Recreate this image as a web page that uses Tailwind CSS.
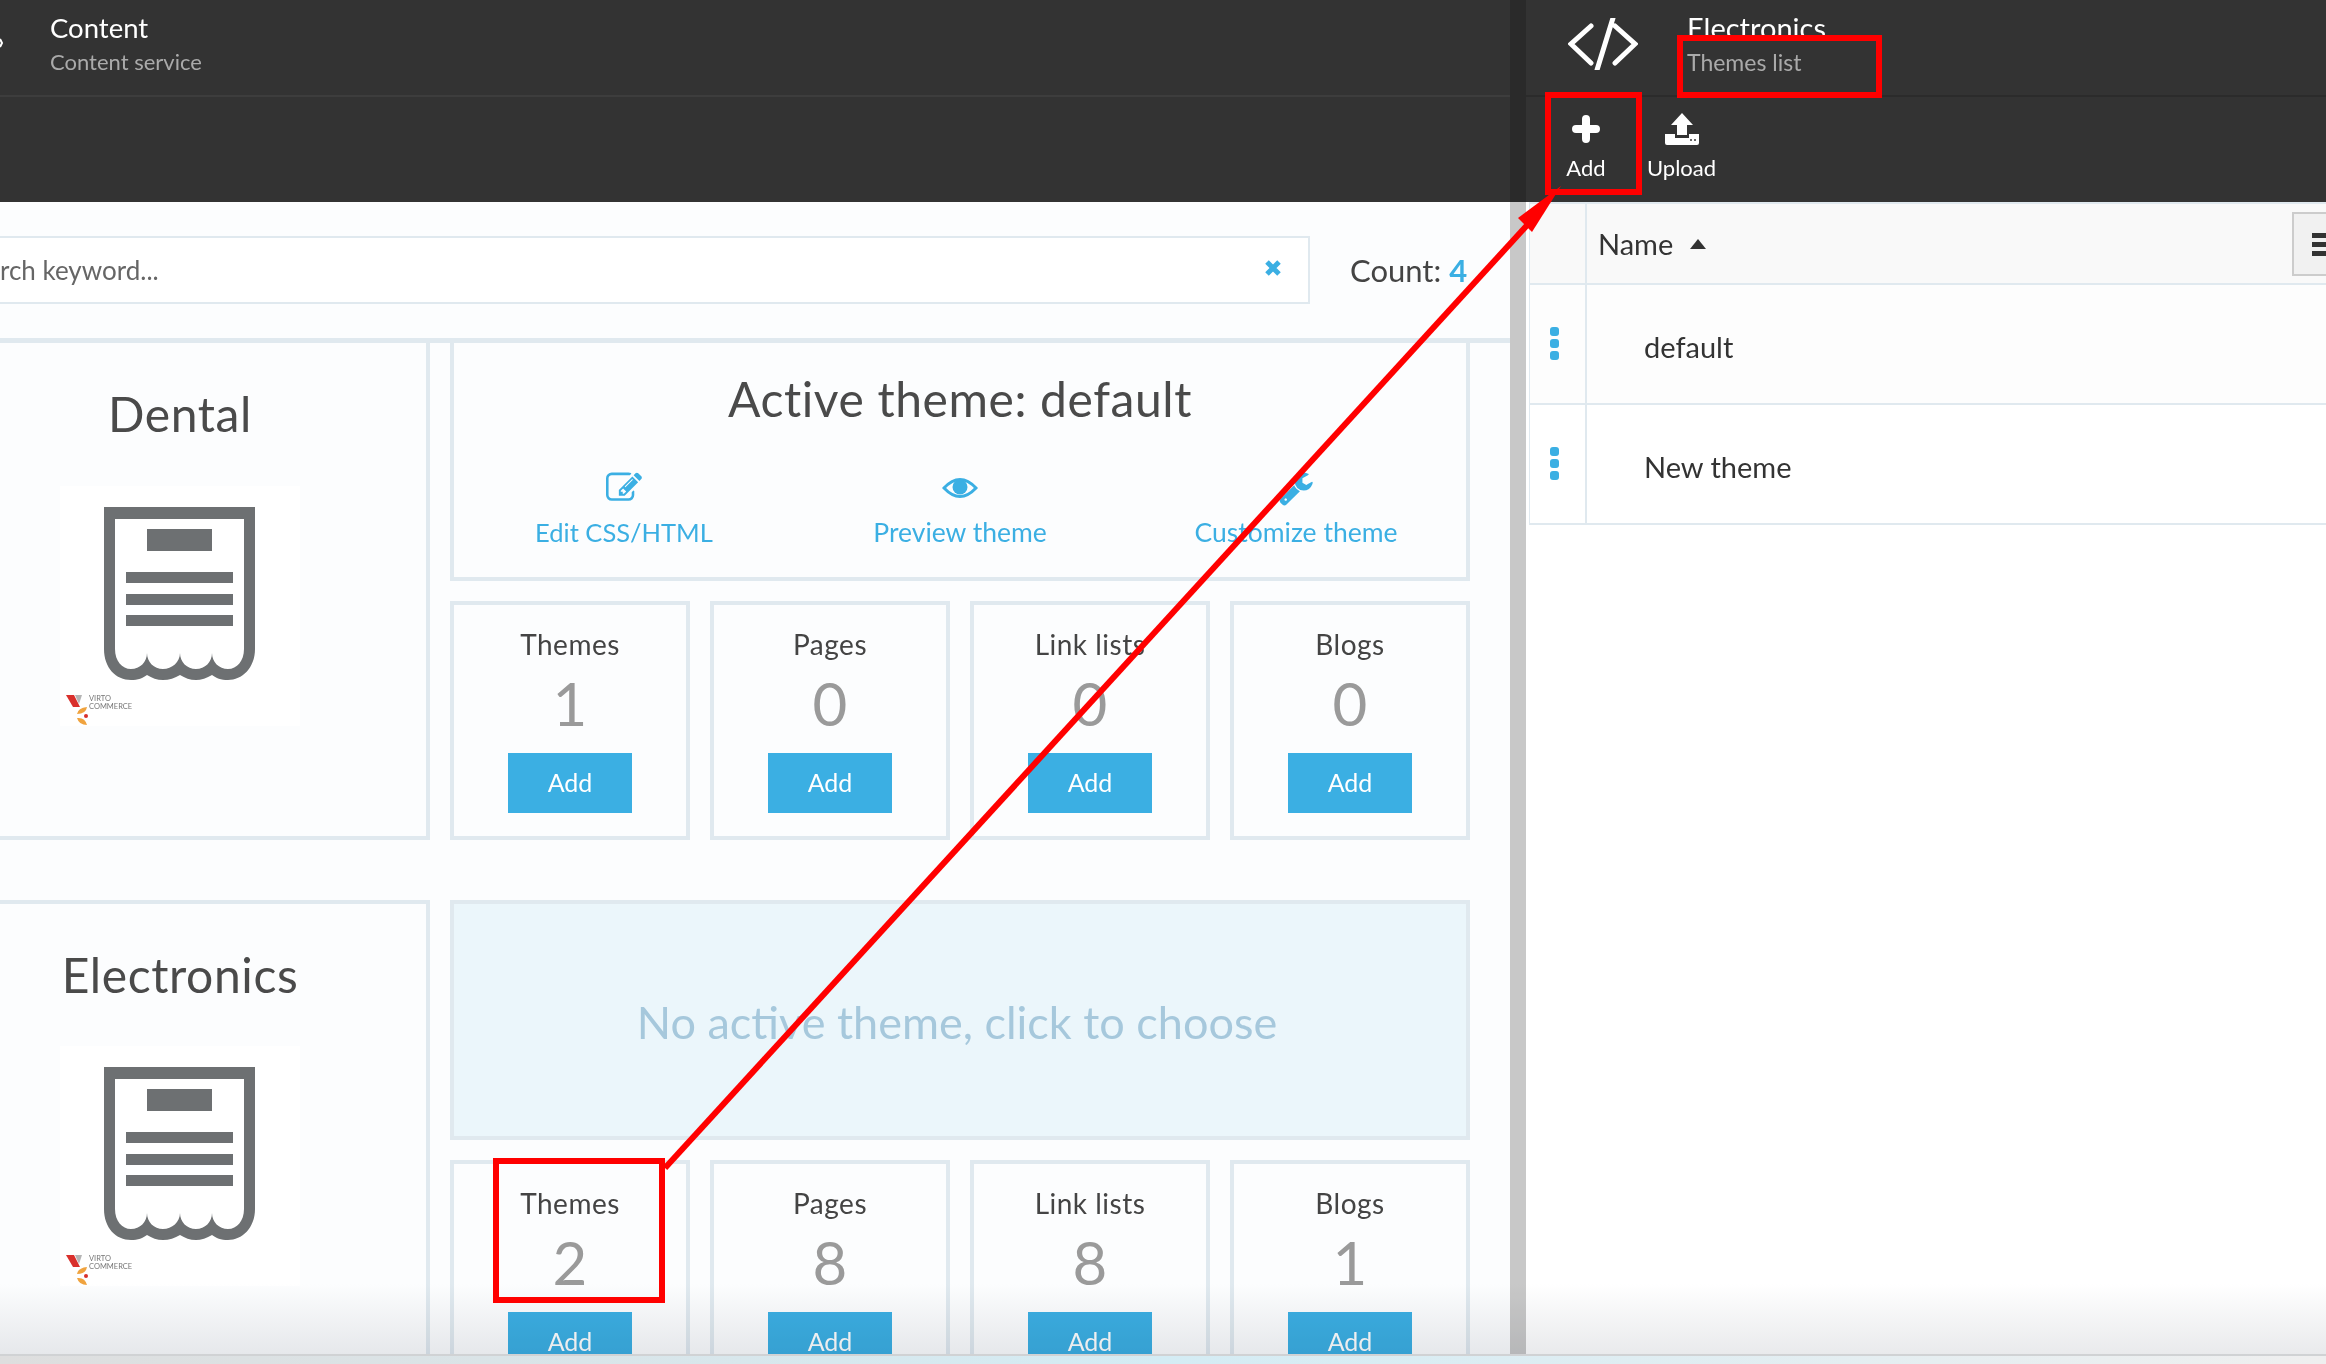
<!DOCTYPE html>
<html lang="en">
<head>
    <meta charset="UTF-8">
    <title>Content - Themes list</title>
    <script src="https://cdn.jsdelivr.net/npm/@tailwindcss/browser@4"></script>
</head>
<body class="relative h-screen overflow-hidden bg-white font-['Lato',sans-serif] text-[#444]">
    <div class="flex h-[1364px]">
        <!-- Content blade -->
        <div class="w-[1510px] h-full overflow-hidden bg-[#fcfdfe]">
            <div class="h-[202px] bg-[#333]">
                <div class="relative h-[97px] pl-[50px] pt-[11px] border-b-2 border-[#3d3d3d]">
                    <svg class="absolute left-0 top-[38px] w-[3px] h-[10px]" viewBox="0 0 3 10"><path d="M0 1l2 4-2 4" fill="none" stroke="#fff" stroke-width="2"/></svg>
                    <div class="text-[27.5px] leading-[34px] text-white">Content</div>
                    <div class="text-[22px] leading-[34px] text-[#aaa]">Content service</div>
                </div>
            </div>

            <div class="h-[136px] flex items-center pr-[40px]">
                <div class="w-[1310px] h-[68px] flex items-center justify-between bg-white border-y-2 border-r-2 border-[#e0e9ef] pr-[26px]">
                    <span class="text-[26px] text-[#666]">rch keyword...</span>
                    <svg class="w-[18px] h-[18px] mb-[4px]" viewBox="0 0 18 18"><path d="M3 3l12 12M15 3L3 15" stroke="#3bafe3" stroke-width="5"/></svg>
                </div>
                <div class="ml-[40px] text-[31px] text-[#444]">Count: <b class="text-[#3bafe3]">4</b></div>
            </div>

            <div class="border-t-[5px] border-[#e0e9ef] pr-[40px]">
                <!-- Dental -->
                <div class="flex gap-[20px] h-[497px]">
                    <div class="w-[430px] border-r-4 border-b-4 border-[#e0e9ef] pr-[66px] flex flex-col items-center">
                        <div class="mt-[41px] h-[60px] text-[48px] tracking-[0.6px] leading-[60px] text-[#4a4a4a]">Dental</div>
                        <div class="mt-[42px] w-[240px] h-[240px] bg-white">
                            <svg width="240" height="240" viewBox="0 0 240 240">
                                <path fill-rule="evenodd" d="M44 21H195V163C195 182 182 194 168 194 161 194 156 192 152 189 147 192 141 194 136 194 130 194 125 192 120 189 115 192 109 194 103 194 97 194 92 192 87 189 83 192 78 194 71 194 56 194 44 182 44 163ZM55 33V163C55 175 62 183 71 183 80 183 87 176 87 167 87 176 94 183 103 183 112 183 120 176 120 167 120 176 127 183 136 183 145 183 152 176 152 167 152 176 159 183 168 183 177 183 184 175 184 163V33Z" fill="#6d7072"/>
                                <path d="M87 43h65v22H87zM66 86h107v11H66zM66 108h107v11H66zM66 129h107v11H66z" fill="#6d7072"/>
                                <path d="M6 209h8l6 12h-7z" fill="#d9302c"/>
                                <path d="M15 209h7l-3 9z" fill="#b5b5b5"/>
                                <path d="M17 228q1-6 10-7-1 7-10 7zM17 232q8-1 10 7-8 0-10-7z" fill="#f0a33e"/>
                                <circle cx="26" cy="230" r="2" fill="#d9302c"/>
                                <text x="29" y="215" font-size="7.5" fill="#777">VIRTO</text>
                                <text x="29" y="223" font-size="7.5" fill="#777">COMMERCE</text>
                            </svg>
                        </div>
                    </div>
                    <div class="w-[1020px] flex flex-col gap-[20px]">
                        <div class="h-[238px] border-x-4 border-b-4 border-[#e0e9ef] flex flex-col items-center">
                            <div class="mt-[26px] h-[60px] text-[48px] tracking-[0.6px] leading-[60px] text-[#4a4a4a]">Active theme: default</div>
                            <div class="mt-[41px] w-full grid grid-cols-3 px-[2px] text-[#3bafe3] text-[26.5px] leading-[32px] text-center">
                                <div class="flex flex-col items-center gap-[10px]">
                                    <svg class="w-[36px] h-[36px]" viewBox="0 0 1792 1792" fill="#3bafe3"><path d="M888 1184l116-116-152-152-116 116v56h96v96h56zm440-720q-16-16-33 1l-350 350q-17 17-1 33t33-1l350-350q17-17 1-33zm80 594v190q0 119-84.5 203.5t-203.5 84.5h-832q-119 0-203.5-84.5t-84.5-203.5v-832q0-119 84.5-203.5t203.5-84.5h832q63 0 117 25 15 7 18 23 3 17-9 29l-49 49q-14 14-32 8-23-6-45-6h-832q-66 0-113 47t-47 113v832q0 66 47 113t113 47h832q66 0 113-47t47-113v-126q0-13 9-22l64-64q15-15 35-7t20 29zm-96-738l288 288-672 672h-288v-288zm444 132l-92 92-288-288 92-92q28-28 68-28t68 28l152 152q28 28 28 68t-28 68z"/></svg>
                                    <span class="text-[25.5px]">Edit CSS/HTML</span>
                                </div>
                                <div class="flex flex-col items-center gap-[10px]">
                                    <svg class="w-[36px] h-[36px]" viewBox="0 0 36 36"><path d="M2 18q16-17 32 0-16 17-32 0Z" fill="none" stroke="#3bafe3" stroke-width="3"/><circle cx="18" cy="17" r="7.5" fill="#3bafe3"/></svg>
                                    <span>Preview theme</span>
                                </div>
                                <div class="flex flex-col items-center gap-[10px]">
                                    <svg class="w-[36px] h-[36px]" viewBox="0 0 1792 1792" fill="#3bafe3"><path d="M448 1472q0-26-19-45t-45-19-45 19-19 45 19 45 45 19 45-19 19-45zm644-420l-682 682q-37 37-90 37-52 0-91-37l-106-108q-38-36-38-90 0-53 38-91l681-681q39 98 114.5 173.5t173.5 114.5zm634-435q0 39-23 106-47 134-164.5 217.5t-258.5 83.5q-185 0-316.5-131.5t-131.5-316.5 131.5-316.5 316.5-131.5q58 0 121.5 16.5t107.5 46.5q16 11 16 28t-16 28l-293 169v224l193 107q5-3 79-48.5t135.5-81 70.5-35.5q15 0 23.5 10t8.5 25z"/></svg>
                                    <span>Customize theme</span>
                                </div>
                            </div>
                        </div>
                        <div class="grid grid-cols-4 gap-[20px] h-[240px]">
                            <div class="border-4 border-[#e0e9ef] flex flex-col items-center"><div class="mt-[22px] text-[28px] tracking-[0.5px] leading-[34px]">Themes</div><div class="mt-[6px] text-[60px] leading-[72px] text-[#9a9a9a]">1</div><button class="mt-[14px] w-[124px] h-[60px] bg-[#3bafe3] text-white text-[25px]">Add</button></div>
                            <div class="border-4 border-[#e0e9ef] flex flex-col items-center"><div class="mt-[22px] text-[28px] tracking-[0.5px] leading-[34px]">Pages</div><div class="mt-[6px] text-[60px] leading-[72px] text-[#9a9a9a]">0</div><button class="mt-[14px] w-[124px] h-[60px] bg-[#3bafe3] text-white text-[25px]">Add</button></div>
                            <div class="border-4 border-[#e0e9ef] flex flex-col items-center"><div class="mt-[22px] text-[28px] tracking-[0.5px] leading-[34px]">Link lists</div><div class="mt-[6px] text-[60px] leading-[72px] text-[#9a9a9a]">0</div><button class="mt-[14px] w-[124px] h-[60px] bg-[#3bafe3] text-white text-[25px]">Add</button></div>
                            <div class="border-4 border-[#e0e9ef] flex flex-col items-center"><div class="mt-[22px] text-[28px] tracking-[0.5px] leading-[34px]">Blogs</div><div class="mt-[6px] text-[60px] leading-[72px] text-[#9a9a9a]">0</div><button class="mt-[14px] w-[124px] h-[60px] bg-[#3bafe3] text-white text-[25px]">Add</button></div>
                        </div>
                    </div>
                </div>

                <!-- Electronics -->
                <div class="flex gap-[20px] mt-[60px] h-[500px]">
                    <div class="w-[430px] border-r-4 border-t-4 border-[#e0e9ef] pr-[66px] flex flex-col items-center">
                        <div class="mt-[41px] h-[60px] text-[48px] tracking-[0.6px] leading-[60px] text-[#4a4a4a]">Electronics</div>
                        <div class="mt-[41px] w-[240px] h-[240px] bg-white">
                            <svg width="240" height="240" viewBox="0 0 240 240">
                                <path fill-rule="evenodd" d="M44 21H195V163C195 182 182 194 168 194 161 194 156 192 152 189 147 192 141 194 136 194 130 194 125 192 120 189 115 192 109 194 103 194 97 194 92 192 87 189 83 192 78 194 71 194 56 194 44 182 44 163ZM55 33V163C55 175 62 183 71 183 80 183 87 176 87 167 87 176 94 183 103 183 112 183 120 176 120 167 120 176 127 183 136 183 145 183 152 176 152 167 152 176 159 183 168 183 177 183 184 175 184 163V33Z" fill="#6d7072"/>
                                <path d="M87 43h65v22H87zM66 86h107v11H66zM66 108h107v11H66zM66 129h107v11H66z" fill="#6d7072"/>
                                <path d="M6 209h8l6 12h-7z" fill="#d9302c"/>
                                <path d="M15 209h7l-3 9z" fill="#b5b5b5"/>
                                <path d="M17 228q1-6 10-7-1 7-10 7zM17 232q8-1 10 7-8 0-10-7z" fill="#f0a33e"/>
                                <circle cx="26" cy="230" r="2" fill="#d9302c"/>
                                <text x="29" y="215" font-size="7.5" fill="#777">VIRTO</text>
                                <text x="29" y="223" font-size="7.5" fill="#777">COMMERCE</text>
                            </svg>
                        </div>
                    </div>
                    <div class="w-[1020px] flex flex-col gap-[20px]">
                        <div class="h-[240px] shrink-0 bg-[#ebf6fb] border-4 border-[#e0e9ef] pt-[6px] pr-[6px] flex items-center justify-center text-[45px] text-[#a6c8dc]">No active theme, click to choose</div>
                        <div class="grid grid-cols-4 gap-[20px] h-[240px]">
                            <div class="border-4 border-[#e0e9ef] flex flex-col items-center"><div class="mt-[22px] text-[28px] tracking-[0.5px] leading-[34px]">Themes</div><div class="mt-[6px] text-[60px] leading-[72px] text-[#9a9a9a]">2</div><button class="mt-[14px] w-[124px] h-[60px] bg-[#3bafe3] text-white text-[25px]">Add</button></div>
                            <div class="border-4 border-[#e0e9ef] flex flex-col items-center"><div class="mt-[22px] text-[28px] tracking-[0.5px] leading-[34px]">Pages</div><div class="mt-[6px] text-[60px] leading-[72px] text-[#9a9a9a]">8</div><button class="mt-[14px] w-[124px] h-[60px] bg-[#3bafe3] text-white text-[25px]">Add</button></div>
                            <div class="border-4 border-[#e0e9ef] flex flex-col items-center"><div class="mt-[22px] text-[28px] tracking-[0.5px] leading-[34px]">Link lists</div><div class="mt-[6px] text-[60px] leading-[72px] text-[#9a9a9a]">8</div><button class="mt-[14px] w-[124px] h-[60px] bg-[#3bafe3] text-white text-[25px]">Add</button></div>
                            <div class="border-4 border-[#e0e9ef] flex flex-col items-center"><div class="mt-[22px] text-[28px] tracking-[0.5px] leading-[34px]">Blogs</div><div class="mt-[6px] text-[60px] leading-[72px] text-[#9a9a9a]">1</div><button class="mt-[14px] w-[124px] h-[60px] bg-[#3bafe3] text-white text-[25px]">Add</button></div>
                        </div>
                    </div>
                </div>
            </div>
        </div>

        <!-- Divider between blades -->
        <div class="w-[16px] h-full flex flex-col">
            <div class="h-[202px] bg-[#2a2a2a]"></div>
            <div class="flex-1 bg-[#c8c8c8]"></div>
        </div>

        <!-- Themes list blade -->
        <div class="flex-1 min-w-0 overflow-hidden bg-white">
            <div class="h-[202px] bg-[#333]">
                <div class="h-[97px] flex border-b-2 border-[#2b2b2b] pt-[11px]">
                    <svg class="ml-[42px] mt-[7px] w-[70px] h-[52px]" viewBox="0 0 70 52" fill="none" stroke="#fff" stroke-width="5" stroke-linecap="round"><path d="M23 8L3 26l20 19M45 0L29 52M47 8l20 18-20 19" stroke-linejoin="miter"/></svg>
                    <div class="ml-[49px]">
                        <div class="text-[29px] leading-[34px] text-white">Electronics</div>
                        <div class="text-[23px] leading-[34px] text-[#aaa]">Themes list</div>
                    </div>
                </div>
                <div class="flex pl-[30px] text-white text-[22px]">
                    <div class="w-[60px] flex flex-col items-center pt-[18px]">
                        <svg class="w-[28px] h-[28px]" viewBox="0 0 28 28"><path d="M14 4v20M4 14h20" stroke="#fff" stroke-width="8" stroke-linecap="round"/></svg>
                        <span class="mt-[10px] leading-[30px]">Add</span>
                    </div>
                    <div class="ml-[31px] flex flex-col items-center pt-[16px]">
                        <svg class="w-[36px] h-[32px]" viewBox="0 0 36 32" fill="#fff"><path d="M18 0l11 12h-6v10H13V12H7z"/><path d="M1 21h10v4h14v-4h10v9a2 2 0 0 1-2 2H3a2 2 0 0 1-2-2z"/><circle cx="27" cy="27" r="1" fill="#333"/><circle cx="31" cy="27" r="1" fill="#333"/></svg>
                        <span class="mt-[8px] leading-[30px]">Upload</span>
                    </div>
                </div>
            </div>
            <div class="ml-[3px] border-l-[1px] border-[#e0e9ef]">
                <div class="h-[83px] flex items-center bg-[#f9f9f9] border-y-2 border-[#e0e9ef] relative">
                    <div class="w-[57px] h-full border-r-2 border-[#e0e9ef]"></div>
                    <span class="ml-[11px] pt-[1px] text-[29px] text-[#333]">Name</span>
                    <svg class="ml-[16px] w-[18px] h-[12px]" viewBox="0 0 18 12"><path d="M9 1l8 10H1z" fill="#333"/></svg>
                    <div class="absolute right-0 top-[8px] w-[34px] h-[64px] bg-[#f1f1f1] border-2 border-r-0 border-[#ccc] pl-[18px] pt-[19px] flex flex-col gap-[4px]">
                        <i class="block h-[5px] bg-[#333]"></i><i class="block h-[5px] bg-[#333]"></i><i class="block h-[5px] bg-[#333]"></i>
                    </div>
                </div>
                <div class="h-[120px] flex items-center bg-[#fdfdfd] border-b-2 border-[#e0e9ef]">
                    <div class="w-[57px] h-full border-r-2 border-[#e0e9ef] pr-[6px] flex flex-col items-center justify-center gap-[3px] pb-[2px]">
                        <i class="block w-[9px] h-[9px] rounded-[3px] bg-[#3bafe3]"></i><i class="block w-[9px] h-[9px] rounded-[3px] bg-[#3bafe3]"></i><i class="block w-[9px] h-[9px] rounded-[3px] bg-[#3bafe3]"></i>
                    </div>
                    <span class="ml-[57px] pt-[6px] text-[29px] text-[#333]">default</span>
                </div>
                <div class="h-[120px] flex items-center bg-white border-b-2 border-[#e0e9ef]">
                    <div class="w-[57px] h-full border-r-2 border-[#e0e9ef] pr-[6px] flex flex-col items-center justify-center gap-[3px] pb-[2px]">
                        <i class="block w-[9px] h-[9px] rounded-[3px] bg-[#3bafe3]"></i><i class="block w-[9px] h-[9px] rounded-[3px] bg-[#3bafe3]"></i><i class="block w-[9px] h-[9px] rounded-[3px] bg-[#3bafe3]"></i>
                    </div>
                    <span class="ml-[57px] pt-[6px] text-[29px] text-[#333]">New theme</span>
                </div>
            </div>
        </div>
    </div>

    <!-- Fade and window edge at the bottom of the screenshot -->
    <div class="absolute inset-x-0 bottom-[10px] h-[70px] bg-linear-to-b from-white to-[#e9eaec] mix-blend-multiply pointer-events-none"></div>
    <div class="absolute inset-x-0 bottom-0 h-[10px] border-t-2 border-[#d0d2d4] bg-linear-to-r from-[#dedede] via-[#d4ecf4] via-50% to-[#efefef]"></div>

    <!-- Red annotations -->
    <svg class="absolute inset-0 pointer-events-none" width="2326" height="1364" viewBox="0 0 2326 1364" fill="none" stroke="#f00" stroke-width="6">
        <rect x="1680" y="38" width="199" height="57"/>
        <rect x="1548" y="95" width="91" height="97"/>
        <rect x="496" y="1161" width="166" height="139"/>
        <path d="M665 1168L1530 222"/>
        <path d="M1561 186L1518 218 1532 232Z" fill="#f00" stroke="none"/>
    </svg>
</body>
</html>
